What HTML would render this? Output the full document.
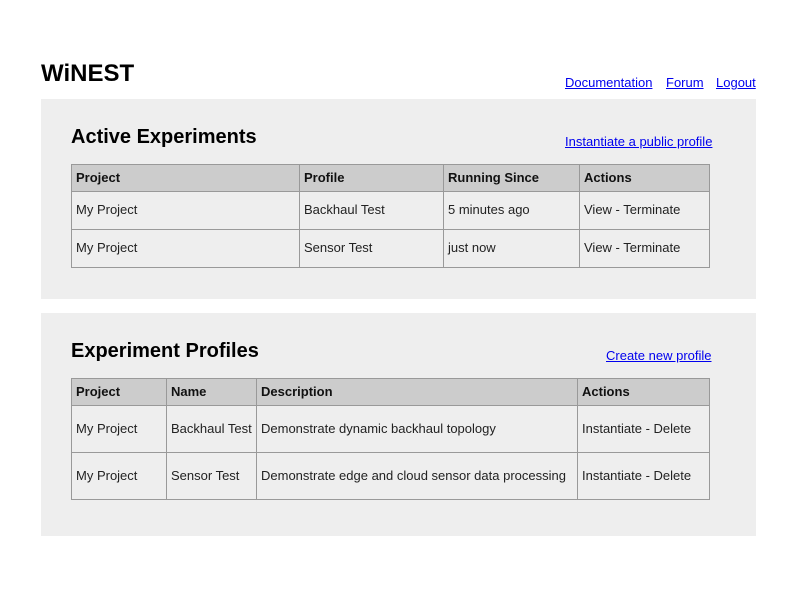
<!DOCTYPE html>
<html><head><style>
body{margin:0;background:#fff;font-family:"Liberation Sans",sans-serif;color:#222;}
.a{position:absolute}
a{color:#00e;text-decoration:underline;font-size:13px}
.panel{position:absolute;left:41px;width:715px;background:#eee}
h1{position:absolute;margin:0;font-size:24px;font-weight:bold;color:#000;left:41px;top:60px}
h2{position:absolute;margin:0;font-size:20px;font-weight:bold;color:#000;left:30px}
table{position:absolute;left:30px;border-collapse:collapse;font-size:13px;table-layout:fixed}
td,th{border:1px solid #999;padding:0 4px 2px;text-align:left;color:#222;white-space:nowrap;overflow:hidden}
th{background:#ccc;font-weight:bold;height:24px;color:#111}
</style></head><body>
<h1>WiNEST</h1>
<div class="a" style="left:565px;top:74px"><a>Documentation</a></div>
<div class="a" style="left:666px;top:74px"><a>Forum</a></div>
<div class="a" style="left:716px;top:74px"><a>Logout</a></div>

<div class="panel" style="top:99px;height:200px">
<h2 style="top:27px">Active Experiments</h2>
<div class="a" style="left:524px;top:34px"><a>Instantiate a public profile</a></div>
<table style="top:65px;width:639px">
<colgroup><col style="width:228px"><col style="width:144px"><col style="width:136px"><col style="width:130px"></colgroup>
<tr><th>Project</th><th>Profile</th><th>Running Since</th><th>Actions</th></tr>
<tr style="height:38px"><td>My Project</td><td>Backhaul Test</td><td>5 minutes ago</td><td>View - Terminate</td></tr>
<tr style="height:38px"><td>My Project</td><td>Sensor Test</td><td>just now</td><td>View - Terminate</td></tr>
</table>
</div>

<div class="panel" style="top:313px;height:223px">
<h2 style="top:27px">Experiment Profiles</h2>
<div class="a" style="left:565px;top:34px"><a>Create new profile</a></div>
<table style="top:65px;width:639px">
<colgroup><col style="width:95px"><col style="width:90px"><col style="width:321px"><col style="width:132px"></colgroup>
<tr><th>Project</th><th>Name</th><th>Description</th><th>Actions</th></tr>
<tr style="height:47px"><td>My Project</td><td>Backhaul Test</td><td>Demonstrate dynamic backhaul topology</td><td>Instantiate - Delete</td></tr>
<tr style="height:47px"><td>My Project</td><td>Sensor Test</td><td>Demonstrate edge and cloud sensor data processing</td><td>Instantiate - Delete</td></tr>
</table>
</div>
</body></html>
